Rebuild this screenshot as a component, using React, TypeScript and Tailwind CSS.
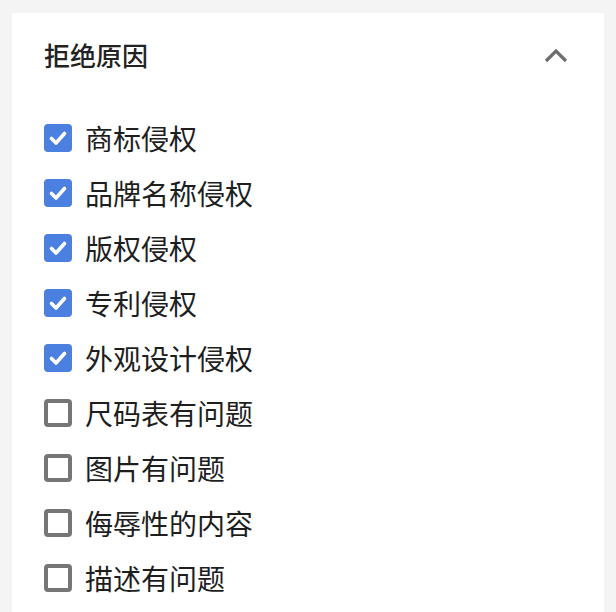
import React from "react";

const items: { label: string; checked: boolean }[] = [
  { label: "商标侵权", checked: true },
  { label: "品牌名称侵权", checked: true },
  { label: "版权侵权", checked: true },
  { label: "专利侵权", checked: true },
  { label: "外观设计侵权", checked: true },
  { label: "尺码表有问题", checked: false },
  { label: "图片有问题", checked: false },
  { label: "侮辱性的内容", checked: false },
  { label: "描述有问题", checked: false },
];

function Box({ checked }: { checked: boolean }) {
  if (checked) {
    return (
      <div className="w-[28px] h-[28px] rounded-[4px] bg-[#4b7fe0] flex items-center justify-center shrink-0">
        <svg width="28" height="28" viewBox="0 0 28 28">
          <path d="M7.5 14.5 L12 19 L20.5 9.5" fill="none" stroke="#ffffff" strokeWidth="3.6" strokeLinecap="round" strokeLinejoin="round" />
        </svg>
      </div>
    );
  }
  return <div className="w-[28px] h-[28px] rounded-[4px] border-[4px] border-[#767676] bg-white shrink-0" />;
}

export default function App() {
  return (
    <div
      className="w-[616px] h-[612px] bg-[#f4f4f4] pt-[13px] px-[12px] overflow-hidden"
      style={{ fontFamily: '"Noto Sans CJK SC", "Noto Sans", sans-serif' }}
    >
      <div className="bg-white h-[620px] pt-[24px] pl-[32px] pr-[36px]">
        <div className="flex items-center justify-between h-[36px]">
          <span className="text-[26px] leading-[36px] font-medium text-[#222222]">拒绝原因</span>
          <svg width="24" height="15" viewBox="0 0 24 15">
            <path d="M2 13 L12 3 L22 13" fill="none" stroke="#6e6e6e" strokeWidth="3.2" />
          </svg>
        </div>
        <div className="mt-[37px] flex flex-col">
          {items.map((it) => (
            <div key={it.label} className="h-[55px] flex items-center gap-[13px]">
              <Box checked={it.checked} />
              <span className="text-[28px] leading-[36px] text-[#1e1e1e]">{it.label}</span>
            </div>
          ))}
        </div>
      </div>
    </div>
  );
}
